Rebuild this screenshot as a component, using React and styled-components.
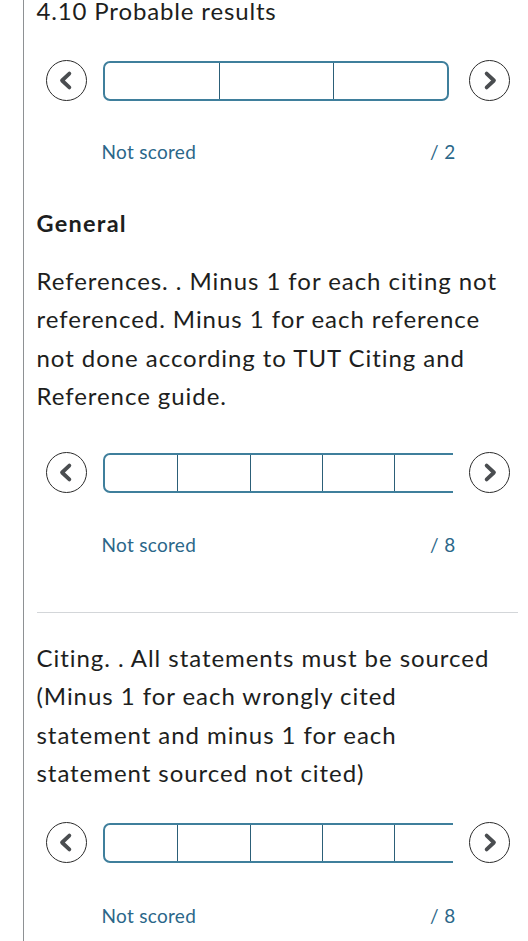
import React from "react";
import styled, { createGlobalStyle } from "styled-components";

const Global = createGlobalStyle`
  html, body { margin: 0; padding: 0; background: #ffffff; }
  body { font-family: Lato, "Noto Sans", sans-serif; color: #222426; }
`;

const Page = styled.div`
  width: 528px;
  height: 941px;
  overflow: hidden;
  box-sizing: border-box;
  padding-left: 23px;
`;

const Panel = styled.div`
  border-left: 1.5px solid #8e9194;
  min-height: 941px;
  box-sizing: border-box;
  padding: 0 10px 0 12.5px;
  display: flex;
  flex-direction: column;
`;

const Title = styled.h2`
  margin: 0;
  font-size: 24px;
  line-height: 22px;
  font-weight: 400;
  letter-spacing: 0.85px;
  color: #1d1e20;
`;

const GroupName = styled.h3`
  margin: ${(p) => p.$top}px 0 0;
  font-size: 23.5px;
  line-height: 28px;
  font-weight: 700;
  letter-spacing: 1.25px;
  color: #1d1e20;
`;

const Description = styled.p`
  margin: ${(p) => p.$top}px 0 0;
  font-size: 24px;
  line-height: 38.3px;
  font-weight: 400;
  letter-spacing: 0.95px;
  color: #1d1e20;
`;

const SliderRow = styled.div`
  margin-top: ${(p) => p.$top}px;
  padding-left: 9.5px;
  display: flex;
  align-items: center;
  gap: 16px;
  height: 41px;
`;

const RoundButton = styled.button`
  flex: none;
  width: 41px;
  height: 41px;
  border-radius: 50%;
  border: 1.5px solid #2b2b2b;
  background: #fff;
  padding: 0;
  display: flex;
  align-items: center;
  justify-content: center;
  cursor: pointer;
`;

const TrackWindow = styled.div`
  flex: none;
  width: 350px;
  height: 40px;
  overflow: hidden;
`;

const Track = styled.div`
  display: flex;
  width: max-content;
  min-width: 346px;
  height: 40px;
  box-sizing: border-box;
  border: 2px solid #3f7f9c;
  border-radius: 7px;
`;

const Level = styled.div`
  flex: 1 0 72.3px;
  height: 100%;
  box-sizing: border-box;
  & + & { border-left: 1.5px solid #2c5f78; }
`;

const ScoreRow = styled.div`
  margin: ${(p) => p.$top}px 0 0 65px;
  width: 354px;
  display: flex;
  justify-content: space-between;
  font-size: 19px;
  line-height: 23px;
  letter-spacing: 0.3px;
  color: #2b6789;
`;

const Rule = styled.hr`
  margin: ${(p) => p.$top}px 0 0;
  border: 0;
  border-top: 1px solid #d3d6d9;
  height: 0;
`;

const Chevron = ({ dir }) => (
  <svg width="41" height="41" viewBox="0 0 41 41" aria-hidden="true">
    <path
      d={dir === "left" ? "M23.5 13.2 L15.8 20.5 L23.5 27.8" : "M17.5 13.2 L25.2 20.5 L17.5 27.8"}
      fill="none"
      stroke="#4a4d50"
      strokeWidth="4"
      strokeLinecap="round"
      strokeLinejoin="round"
    />
  </svg>
);

const Slider = ({ levels, top }) => (
  <SliderRow $top={top}>
    <RoundButton aria-label="Previous">
      <Chevron dir="left" />
    </RoundButton>
    <TrackWindow>
      <Track>
        {Array.from({ length: levels }).map((_, i) => (
          <Level key={i} />
        ))}
      </Track>
    </TrackWindow>
    <RoundButton aria-label="Next">
      <Chevron dir="right" />
    </RoundButton>
  </SliderRow>
);

const Score = ({ out, top }) => (
  <ScoreRow $top={top}>
    <span>Not scored</span>
    <span>/ {out}</span>
  </ScoreRow>
);

export default function App() {
  return (
    <>
      <Global />
      <Page>
        <Panel>
          <Title>4.10 Probable results</Title>
          <Slider levels={3} top={38} />
          <Score out={2} top={39} />

          <GroupName $top={46}>General</GroupName>
          <Description $top={25}>
            References. . Minus 1 for each citing not referenced. Minus 1 for each reference
            not done according to TUT Citing and Reference guide.
          </Description>
          <Slider levels={9} top={37} />
          <Score out={8} top={40} />

          <Rule $top={56} />
          <Description $top={26}>
            Citing. . All statements must be sourced (Minus 1 for each wrongly cited statement
            and minus 1 for each statement sourced not cited)
          </Description>
          <Slider levels={9} top={30} />
          <Score out={8} top={41} />
        </Panel>
      </Page>
    </>
  );
}
